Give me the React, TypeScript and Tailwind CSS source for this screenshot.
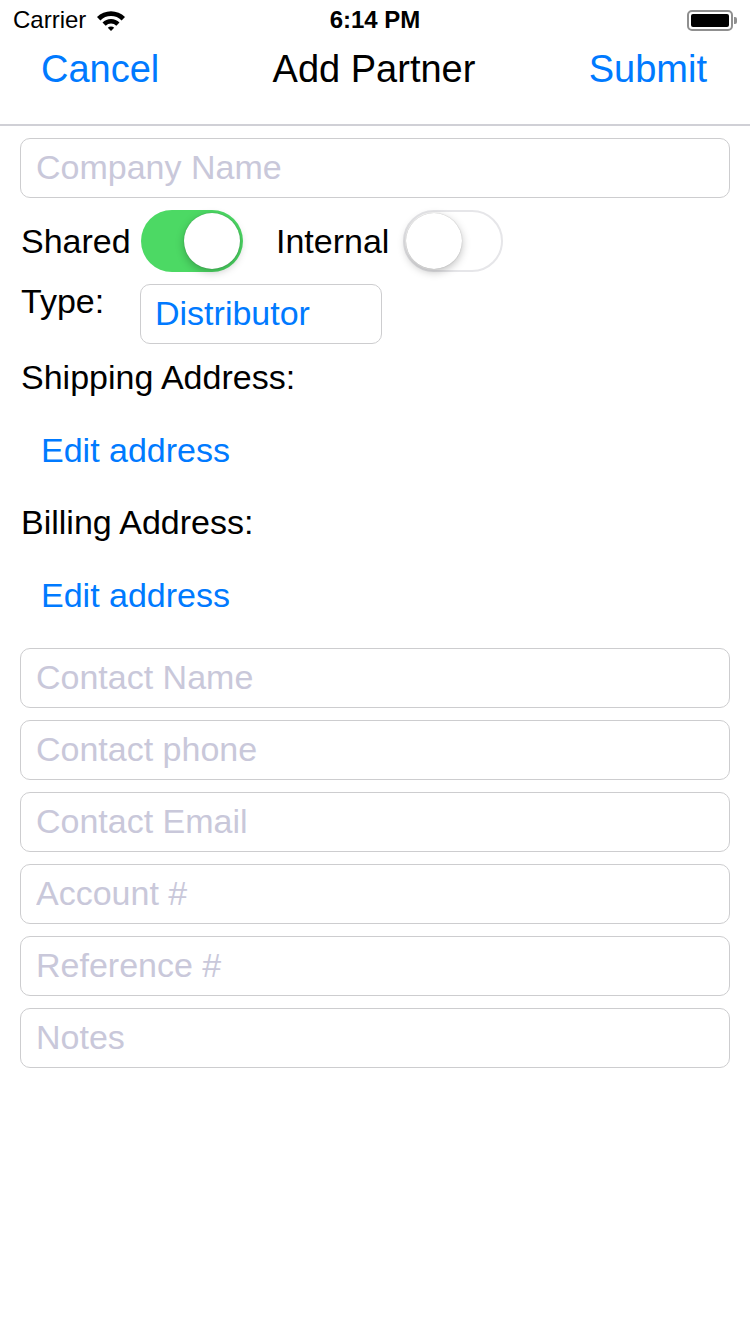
const fields = ["Contact Name", "Contact phone", "Contact Email", "Account #", "Reference #", "Notes"]

function Toggle({ on }: { on: boolean }) {
  return (
    <div
      className={
        on
          ? "flex h-[62px] w-[102px] items-center justify-end rounded-full bg-[#4cd964] p-[3px]"
          : "flex h-[62px] w-[100px] items-center justify-start rounded-full border-2 border-[#e6e6e9] bg-white p-[1px]"
      }
    >
      <div className="h-[56px] w-[56px] rounded-full bg-white shadow-[0_3px_8px_rgba(0,0,0,0.25),0_0_1px_rgba(0,0,0,0.3)]" />
    </div>
  )
}

function Field({ label, className = "" }: { label: string; className?: string }) {
  return (
    <input
      readOnly
      placeholder={label}
      className={`block h-[60px] w-full rounded-[10px] border border-[#cdcdcf] bg-white pb-[2px] pl-[15px] text-[34px] outline-none placeholder:text-[#c9c8da] ${className}`}
    />
  )
}

export default function App() {
  return (
    <div className="min-h-[1334px] w-[750px] bg-white text-black [font-family:'Liberation_Sans',Arial,sans-serif]">
      {/* Status bar */}
      <div className="grid h-[40px] grid-cols-[1fr_auto_1fr] items-center px-[13px]">
        <div className="flex items-center gap-[11px]">
          <span className="text-[24px] leading-none">Carrier</span>
          <svg width="28" height="20" viewBox="0 0 28 20" className="mt-[1px]">
            <path d="M0 6 A19.8 19.8 0 0 1 28 6 L24.6 9.4 A15 15 0 0 0 3.4 9.4 Z" fill="#000" />
            <path d="M5.5 11.5 A12 12 0 0 1 22.5 11.5 L19.3 14.7 A7.5 7.5 0 0 0 8.7 14.7 Z" fill="#000" />
            <path d="M10.8 16.8 A4.5 4.5 0 0 1 17.2 16.8 L14 20 Z" fill="#000" />
          </svg>
        </div>
        <span className="text-[24px] font-semibold leading-none">6:14 PM</span>
        <div className="flex items-center justify-end">
          <div className="flex h-[21px] w-[46px] items-center rounded-[5px] border-2 border-[#8f8f8f] p-[2px]">
            <div className="h-full w-full rounded-[2px] bg-black" />
          </div>
          <div className="ml-[1px] h-[7px] w-[3px] rounded-r-[2px] bg-[#8f8f8f]" />
        </div>
      </div>

      {/* Nav bar */}
      <div className="grid h-[86px] grid-cols-[1fr_auto_1fr] items-start border-b-2 border-[#d0d0d6] pl-[41px] pr-[43px] pt-[10px] text-[38px] leading-[38px]">
        <span className="text-[#007aff]">Cancel</span>
        <span>Add Partner</span>
        <span className="text-right text-[#007aff]">Submit</span>
      </div>

      {/* Form */}
      <div className="px-[20px] text-[34px] leading-[34px]">
        <Field label="Company Name" className="mt-[12px]" />

        <div className="mt-[12px] flex h-[62px] items-center">
          <span className="w-[121px] pl-[1px]">Shared</span>
          <Toggle on />
          <span className="ml-[33px] w-[127px]">Internal</span>
          <Toggle on={false} />
        </div>

        <div className="mt-[12px] flex items-start">
          <span className="w-[120px] pl-[1px]">Type:</span>
          <div className="flex h-[60px] w-[242px] items-center rounded-[10px] border border-[#cdcdcf] pb-[3px] pl-[14px] text-[#007aff]">
            Distributor
          </div>
        </div>

        <div className="mt-[16px] pl-[1px]">Shipping Address:</div>
        <div className="mt-[39px] pl-[21px] text-[#007aff]">Edit address</div>
        <div className="mt-[38px] pl-[1px]">Billing Address:</div>
        <div className="mt-[39px] pl-[21px] text-[#007aff]">Edit address</div>

        <div className="mt-[36px] flex flex-col gap-[12px]">
          {fields.map((f) => (
            <Field key={f} label={f} />
          ))}
        </div>
      </div>
    </div>
  )
}
